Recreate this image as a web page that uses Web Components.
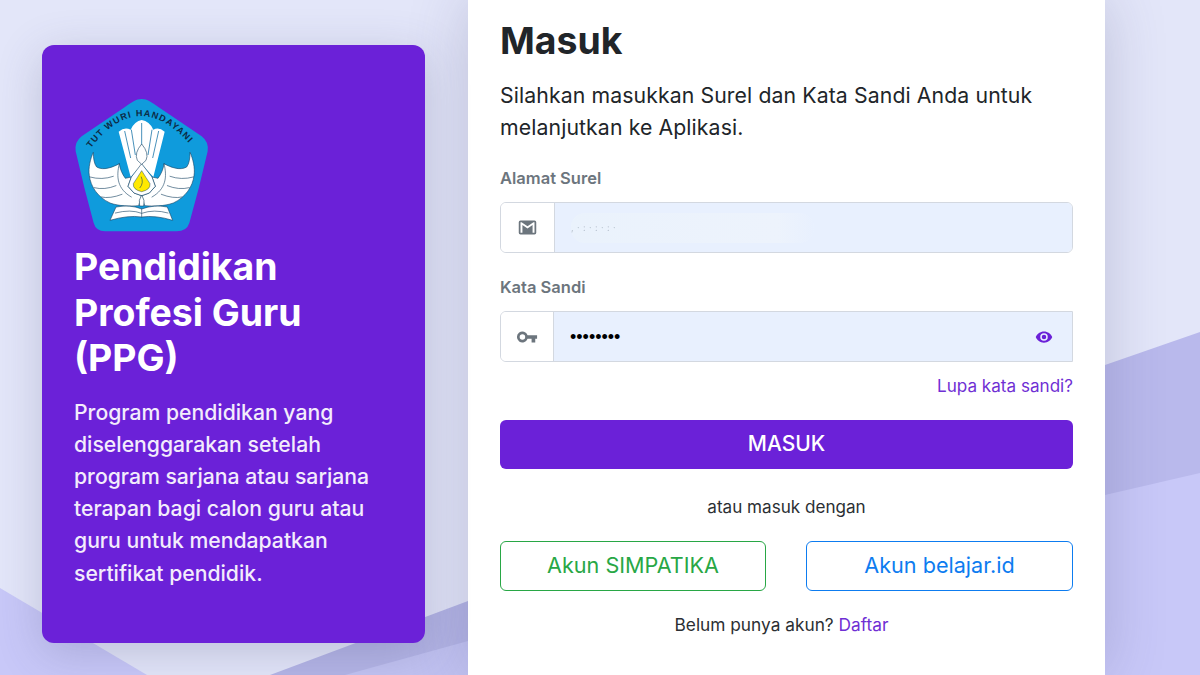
<!DOCTYPE html>
<html lang="id"><head><meta charset="utf-8"><title>Masuk</title>
<style>
html,body{margin:0;height:100%;overflow:hidden}
body{font-family:Inter,"Liberation Sans",sans-serif;background:#e3e6f9}
</style></head><body>
<ppg-page>
  <ppg-info slot="left"></ppg-info>
  <login-card slot="right"></login-card>
</ppg-page>
<script>
const def=(name,html)=>customElements.define(name,class extends HTMLElement{constructor(){super();this.attachShadow({mode:'open'}).innerHTML=html}});
def('ppg-page',`<style>
:host{display:block;position:relative;width:1200px;height:675px;overflow:hidden;background:#e3e6f9}
svg.bg{position:absolute;inset:0;width:1200px;height:675px}
.wrap{position:relative;display:flex;align-items:flex-start;padding-left:42px;gap:43px}
</style>
<svg class="bg" viewBox="0 0 1200 675" aria-hidden="true">
<path d="M0 588 L147 675 H0Z" fill="#c8c8f8"/>
<path d="M270 675 L468 601 V675Z" fill="#b4b5e6"/>
<path d="M345 675 L468 641 V675Z" fill="#c2c3f2"/>
<path d="M1105 365 L1200 332 V675 H1105Z" fill="#b9b9ec"/>
<path d="M1105 495 L1200 473 V675 H1105Z" fill="#c8c8f8"/>
</svg>
<div class="wrap"><slot name="left"></slot><slot name="right"></slot></div>`);

def('tut-wuri-logo',`<style>:host{display:block;width:136px;height:135px}svg{display:block}
text{font:700 27px "Liberation Sans",Arial,sans-serif;fill:#0c2a44;letter-spacing:3.400px}
.o{stroke:#14405f;stroke-width:1.800;fill:#fff;stroke-linejoin:round}
.l{stroke:#14405f;stroke-width:1.800;fill:none;stroke-linecap:round}</style>
<svg width="136" height="135" viewBox="42 25 408 405" role="img" aria-label="Tut Wuri Handayani">
<path d="M245 28C262 28 275 38 295 52L425 140Q447 157 443 185Q418 295 388 400Q380 425 350 425L135 425Q108 425 101 400Q72 295 47 185Q43 157 65 140L195 52C215 38 228 28 245 28Z" fill="#0f9bdc"/>
<path id="arc" d="M92 176Q245 -24 412 190" fill="none"/>
<text><textPath href="#arc">TUT WURI HANDAYANI</textPath></text>
<path d="M176 126Q194 110 212 120Q224 94 245 91Q268 94 280 120Q296 110 314 126L280 262L246 225L212 262Z" fill="#fff"/>
<path d="M214 120L226 196M245 100V165M276 120L264 196M194 124L212 205M296 124L278 205" stroke="#1a75a8" stroke-width="2.400" fill="none"/>
<g id="w"><path class="o" d="M100 188C92 205 84 235 88 258C92 290 112 322 150 340C178 350 210 350 236 348L244 318L222 310L204 290L214 262L196 266C186 252 180 238 178 222C160 232 130 244 110 232C102 222 100 205 100 188Z"/>
<path class="l" d="M90 262Q126 272 160 260M102 294Q134 302 168 288M124 322Q150 328 186 314M178 222C168 262 172 298 214 322"/></g>
<use href="#w" transform="matrix(-1 0 0 1 490 0)"/>
<path class="o" d="M245 222L214 262L204 290L222 310L245 318L268 310L286 290L276 262Z"/>
<path class="o" d="M245 163Q268 190 258 212L245 224L232 212Q222 190 245 163Z"/>
<path d="M245 243Q258 264 270 282Q272 300 245 306Q218 300 220 282Q232 264 245 243Z" fill="#ffe900" stroke="#14405f" stroke-width="1.400"/>
<path class="l" d="M244 262Q252 280 240 294"/>
<path class="o" d="M245 316Q256 332 251 349H239Q234 332 245 316Z"/>
<path class="o" d="M168 352Q212 344 245 358Q282 344 322 352L338 392Q286 376 245 382Q204 376 150 392Z"/>
<path class="l" d="M166 370Q212 358 245 371Q282 358 324 370M245 358V382"/>
</svg>`);

def('ppg-info',`<style>
:host{display:block;position:relative;z-index:1;box-sizing:border-box;width:383px;height:598px;margin-top:45px;padding:53px 32px 0;background:#6b21d8;border-radius:12px;color:#fff;box-shadow:0 10px 46px rgba(70,70,115,.24)}
h1{margin:11px 0 0;font-size:37.4px;line-height:45.5px;font-weight:700}
p{margin:15px 0 0;font-size:21.2px;line-height:32.2px;font-weight:500;color:#f3ecfc}
</style>
<tut-wuri-logo></tut-wuri-logo>
<h1>Pendidikan<br>Profesi Guru<br>(PPG)</h1>
<p>Program pendidikan yang<br>diselenggarakan setelah<br>program sarjana atau sarjana<br>terapan bagi calon guru atau<br>guru untuk mendapatkan<br>sertifikat pendidik.</p>`);

def('text-field',`<style>
:host{display:block}
label{display:block;font-size:16.5px;line-height:24px;font-weight:600;color:#6c757d;margin-bottom:12px}
.g{display:flex;height:51px;box-sizing:border-box;border:1px solid #d3d8e0;border-radius:6px var(--rr,6px) var(--rr,6px) 6px;overflow:hidden}
.i{flex:none;width:var(--iw,53px);display:flex;align-items:center;justify-content:center;background:#fff;border-right:1px solid #d3d8e0;color:#6c757d}
.v{flex:1;display:flex;align-items:center;justify-content:space-between;background:#e8f0fe;padding:0 19px 0 16px;min-width:0}
</style><label><slot name="label"></slot></label><div class="g"><div class="i"><slot name="icon"></slot></div><div class="v"><slot></slot></div></div>`);

def('login-card',`<style>
:host{display:block;box-sizing:border-box;width:637px;height:675px;background:#fff;padding:16px 32px 0;color:#212529;box-shadow:0 0 56px rgba(70,70,115,.24)}
h2{margin:0;font-size:37.4px;line-height:50px;font-weight:700;color:#212529}
.lead{margin:13px 0 0;font-size:21.25px;line-height:32px;letter-spacing:.1px}
text-field{margin-top:22px}
.first{margin-top:23px}
.dots{font-size:18px;color:#000;font-family:"Liberation Sans",sans-serif;line-height:1}
.blur{width:243px;height:30px;display:flex;align-items:center;background:linear-gradient(90deg,#eaf2fc,#edf3fc 85%,#e8f0fe);border-radius:14px;filter:blur(.7px);color:#b6c0cd;font-size:9px;letter-spacing:3.400px}
.forgot{display:block;text-align:right;margin-top:12px;font-size:17.1px;line-height:24px;color:#6f2fd4;text-decoration:none}
.main{display:block;box-sizing:border-box;width:100%;height:49px;margin-top:22px;background:#6b21d8;border:0;border-radius:6px;color:#fff;font:500 21px/47px Inter,sans-serif;text-align:center;padding:0 0 2px}
.or{text-align:center;margin:26px 0 0;font-size:17.1px;line-height:24px;color:#2b2f33}
.row{display:flex;justify-content:space-between;margin-top:22px}
.alt{box-sizing:border-box;width:266px;height:50px;border:1px solid #28a745;border-radius:6px;color:#28a745;background:#fff;font:400 21.6px/46px Inter,sans-serif;text-align:center}
.alt.b{width:267px;border-color:#0d7cf0;color:#0d7cf0}
.reg{text-align:center;margin:22px 0 0;padding-right:10px;font-size:17.3px;line-height:24px;color:#2b2f33}
.reg a{color:#6f2fd4;text-decoration:none}
svg{display:block}
</style>
<h2>Masuk</h2>
<p class="lead">Silahkan masukkan Surel dan Kata Sandi Anda untuk melanjutkan ke Aplikasi.</p>
<text-field class="first"><span slot="label">Alamat Surel</span>
<svg slot="icon" width="21" height="21" viewBox="0 0 24 24" fill="#6c757d"><path d="M20 4H4a2 2 0 0 0-2 2v12a2 2 0 0 0 2 2h16a2 2 0 0 0 2-2V6a2 2 0 0 0-2-2zm0 14h-2.200V9.200L12 13 6.200 9.200V18H4V6h1.200L12 10.500 18.800 6H20z"/></svg>
<span class="blur">,·:·:·:·</span></text-field>
<text-field style="--iw:52px;--rr:0"><span slot="label">Kata Sandi</span>
<svg slot="icon" width="22" height="22" viewBox="0 0 24 24" fill="#6c757d"><path d="M12.650 10A6 6 0 1 0 12.650 14H17v4h4v-4h2v-4zM7 15a3 3 0 1 1 0-6 3 3 0 0 1 0 6z"/></svg>
<span class="dots">••••••••</span>
<svg width="18" height="18" viewBox="0 0 24 24" fill="#6b21d8"><path d="M12 4.500C7 4.500 2.700 7.600 1 12c1.700 4.400 6 7.500 11 7.500s9.300-3.100 11-7.500c-1.700-4.400-6-7.500-11-7.500zM12 17a5 5 0 1 1 0-10 5 5 0 0 1 0 10zm0-8a3 3 0 1 0 0 6 3 3 0 0 0 0-6z"/></svg></text-field>
<a class="forgot" href="#">Lupa kata sandi?</a>
<button class="main">MASUK</button>
<p class="or">atau masuk dengan</p>
<div class="row"><div class="alt">Akun SIMPATIKA</div><div class="alt b">Akun belajar.id</div></div>
<p class="reg">Belum punya akun? <a href="#">Daftar</a></p>`);
</script>
</body></html>
